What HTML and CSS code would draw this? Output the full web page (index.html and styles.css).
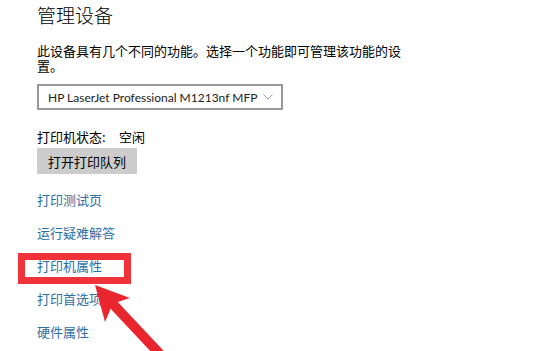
FILE: index.html
```html
<!DOCTYPE html>
<html lang="zh-CN">
<head>
    <meta charset="UTF-8">
    <meta name="viewport" content="width=device-width, initial-scale=1.0">
    <title>管理设备</title>
    <link rel="stylesheet" href="styles.css">
</head>
<body>
    <div class="page">
        <h1 class="title">管理设备</h1>
        <p class="desc">此设备具有几个不同的功能。选择一个功能即可管理该功能的设置。</p>

        <div class="select">
            <span class="select-text">HP LaserJet Professional M1213nf MFP</span>
            <svg class="chevron" width="10" height="6" viewBox="0 0 10 6">
                <polyline points="0.5,0.5 5,5 9.5,0.5" fill="none" stroke="#999" stroke-width="1"/>
            </svg>
        </div>

        <div class="status">
            <span class="status-label">打印机状态:</span>
            <span>空闲</span>
        </div>
        <button class="btn">打开打印队列</button>

        <div class="links">
            <a class="link" href="#">打印测试页</a>
            <a class="link" href="#">运行疑难解答</a>
            <a class="link" href="#">打印机属性</a>
            <a class="link" href="#">打印首选项</a>
            <a class="link" href="#">硬件属性</a>
        </div>
    </div>

    <!-- annotation: highlight box and arrow -->
    <div class="mark"></div>
    <svg class="arrow" width="560" height="351" viewBox="0 0 560 351">
        <polygon fill="#e9252d" points="95,285 130,298 117.8,302 167.1,354.5 159.9,361.3 110.6,308.8 105,322"/>
    </svg>
</body>
</html>
```

FILE: styles.css
```css
body {
    margin: 0;
    background: #fff;
    color: #000;
    font-family: "Noto Sans CJK SC", sans-serif;
}
.page {
    padding: 3px 0 0 37px;
    display: flex;
    flex-direction: column;
    align-items: flex-start;
}
.title {
    margin: 0;
    font-size: 19px;
    font-weight: 300;
    line-height: 24px;
}
.desc {
    margin: 16px 0 0;
    width: 368px;
    font-size: 13px;
    line-height: 15px;
}
.select {
    margin-top: 11px;
    box-sizing: border-box;
    width: 246px;
    height: 26px;
    border: 2px solid #999;
    padding: 0 8px 0 9px;
    display: flex;
    align-items: center;
    justify-content: space-between;
    font-family: Lato, sans-serif;
    font-size: 12px;
    color: #222;
    white-space: nowrap;
}
.chevron {
    flex-shrink: 0;
}
.status {
    margin-top: 18px;
    font-size: 13px;
    line-height: 18px;
    display: flex;
}
.status-label {
    width: 82px;
}
.btn {
    margin-top: 2px;
    height: 26px;
    padding: 0 11px;
    border: none;
    background: #ccc;
    color: #000;
    font-family: inherit;
    font-size: 13px;
}
.links {
    margin-top: 17px;
    display: flex;
    flex-direction: column;
    gap: 15px;
}
.link {
    color: #2c6fa3;
    text-decoration: none;
    font-size: 13px;
    line-height: 18px;
}
.mark {
    position: absolute;
    left: 18px;
    top: 253px;
    width: 113px;
    height: 31px;
    box-sizing: border-box;
    border: 7px solid #f0323a;
}
.arrow {
    position: absolute;
    left: 0;
    top: 0;
    pointer-events: none;
}
```
